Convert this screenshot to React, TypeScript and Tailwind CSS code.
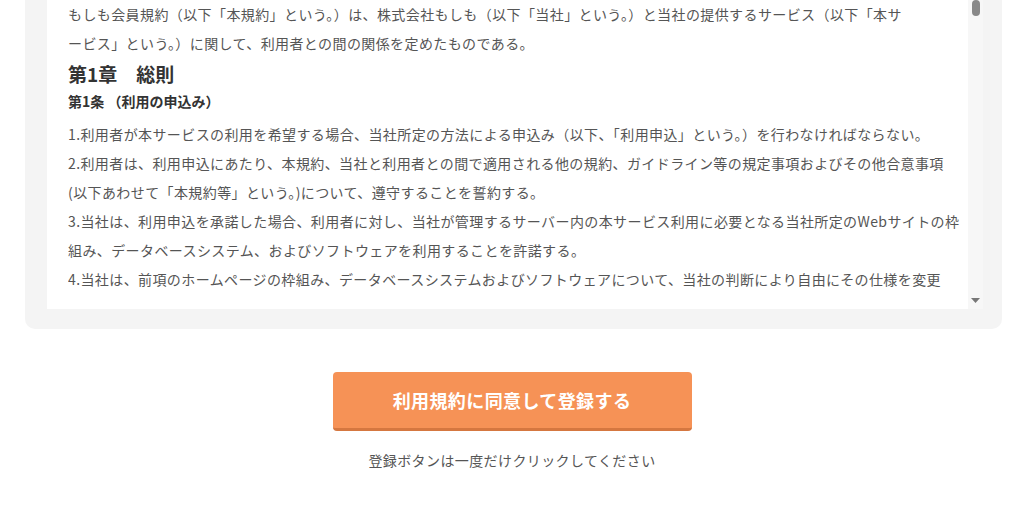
import React from 'react'

const items = [
  '1.利用者が本サービスの利用を希望する場合、当社所定の方法による申込み（以下、「利用申込」という。）を行わなければならない。',
  '2.利用者は、利用申込にあたり、本規約、当社と利用者との間で適用される他の規約、ガイドライン等の規定事項およびその他合意事項\n(以下あわせて「本規約等」という。)について、遵守することを誓約する。',
  '3.当社は、利用申込を承諾した場合、利用者に対し、当社が管理するサーバー内の本サービス利用に必要となる当社所定のWebサイトの枠\n組み、データベースシステム、およびソフトウェアを利用することを許諾する。',
  '4.当社は、前項のホームページの枠組み、データベースシステムおよびソフトウェアについて、当社の判断により自由にその仕様を変更',
]

const Lines = ({ text }: { text: string }) => (
  <>
    {text.split('\n').map((line, i) => (
      <React.Fragment key={i}>
        {i > 0 && <br />}
        {line}
      </React.Fragment>
    ))}
  </>
)

export default function App() {
  return (
    <div className="min-h-screen bg-white font-['Noto_Sans_CJK_JP',sans-serif]">
      {/* terms panel */}
      <div className="ml-[25px] w-[977px] rounded-b-[10px] bg-[#f4f4f4] pb-[20px] pl-[22px] pr-[19px]">
        <div className="flex h-[309px] bg-white">
          <div className="flex-1 pb-[7px] pl-[21px] pr-[3px]">
            <div className="h-full overflow-hidden whitespace-nowrap text-[14px] tracking-[0.4px] text-[#555]">
              <p className="leading-[29px]">
                <Lines text={'もしも会員規約（以下「本規約」という。）は、株式会社もしも（以下「当社」という。）と当社の提供するサービス（以下「本サ\nービス」という。）に関して、利用者との間の関係を定めたものである。'} />
              </p>
              <h2 className="mt-[2px] text-[19px] font-bold leading-[28px] tracking-normal text-[#333]">
                第1章　総則
              </h2>
              <h3 className="text-[14px] font-bold leading-[26px] tracking-normal text-[#333]">
                第1条 （利用の申込み）
              </h3>
              <div className="mt-[6px] leading-[29px]">
                {items.map((t, i) => (
                  <p key={i}>
                    <Lines text={t} />
                  </p>
                ))}
              </div>
            </div>
          </div>

          {/* scrollbar */}
          <div className="flex w-[15px] flex-col items-center justify-between bg-[#f7f7f7] pb-[6px]">
            <div className="h-[16px] w-[8px] rounded-full bg-[#888]" />
            <svg width="9" height="5" viewBox="0 0 9 5">
              <path d="M0 0h9L4.5 5z" fill="#777" />
            </svg>
          </div>
        </div>
      </div>

      {/* submit */}
      <div className="mt-[43px] flex flex-col items-center">
        <button className="h-[59px] w-[359px] rounded-[4px] border-b-[3px] border-[#d57740] bg-[#f69256] text-[18px] font-bold tracking-[0.4px] text-white">
          利用規約に同意して登録する
        </button>
        <p className="mt-[18px] text-[14px] leading-[22px] tracking-[0.4px] text-[#555]">
          登録ボタンは一度だけクリックしてください
        </p>
      </div>
    </div>
  )
}
